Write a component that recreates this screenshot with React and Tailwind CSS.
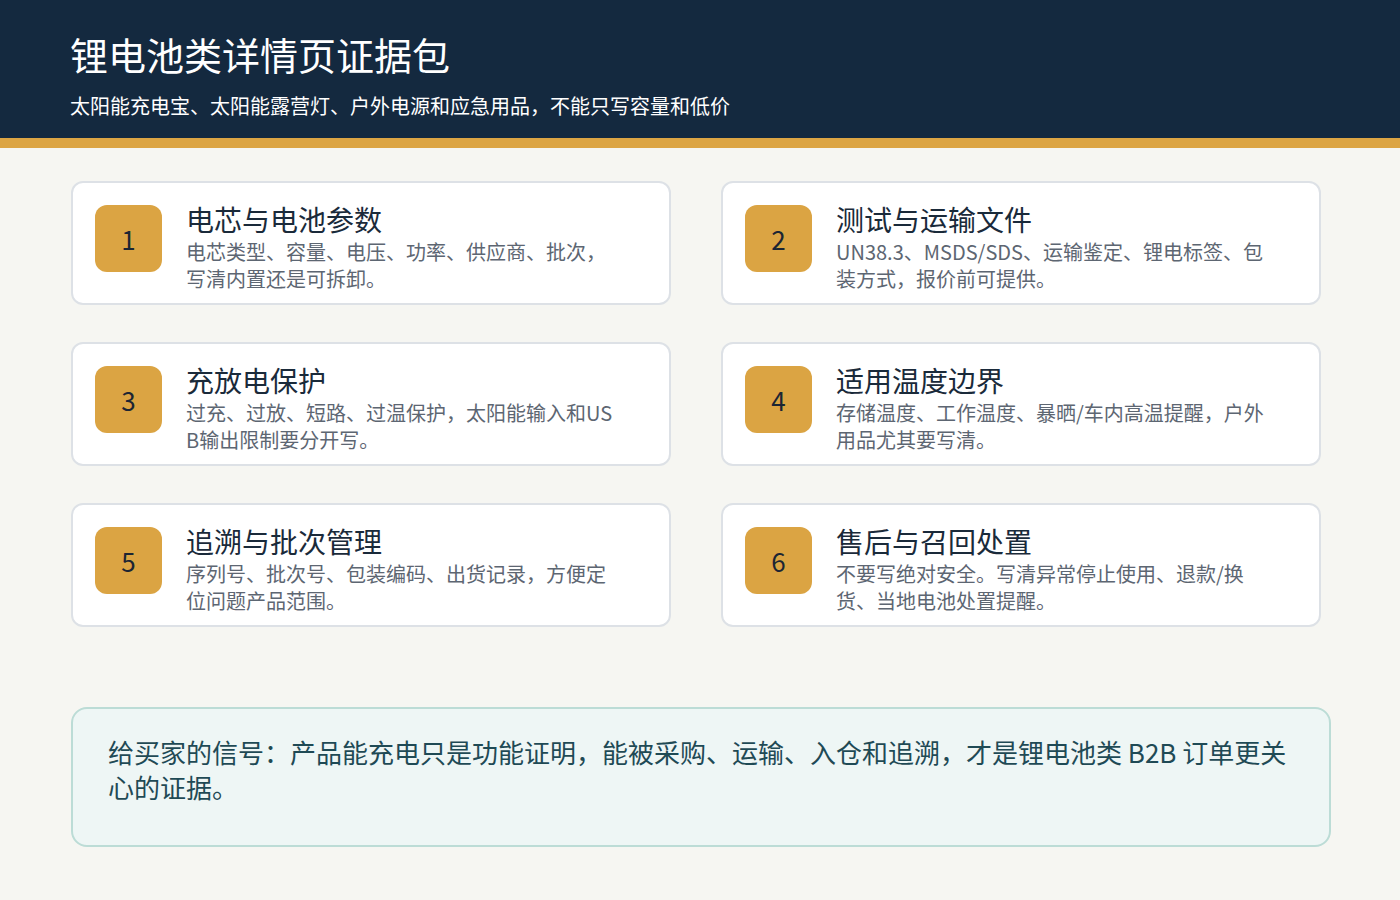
const items=[
["1","电芯与电池参数","电芯类型、容量、电压、功率、供应商、批次，写清内置还是可拆卸。"],
["2","测试与运输文件","UN38.3、MSDS/SDS、运输鉴定、锂电标签、包装方式，报价前可提供。"],
["3","充放电保护","过充、过放、短路、过温保护，太阳能输入和USB输出限制要分开写。"],
["4","适用温度边界","存储温度、工作温度、暴晒/车内高温提醒，户外用品尤其要写清。"],
["5","追溯与批次管理","序列号、批次号、包装编码、出货记录，方便定位问题产品范围。"],
["6","售后与召回处置","不要写绝对安全。写清异常停止使用、退款/换货、当地电池处置提醒。"],
];
export default function App(){
return <div className="w-[1400px] h-[900px] bg-[#f6f6f2] overflow-hidden" style={{fontFamily:'"Noto Sans CJK SC","Noto Sans",sans-serif'}}>
<div className="h-[138px] bg-[#14293f] pl-[70px] pt-[28px]">
<div className="text-[38px] leading-[52px] text-white">锂电池类详情页证据包</div>
<div className="text-[20px] leading-[28px] text-white mt-[12px]">太阳能充电宝、太阳能露营灯、户外电源和应急用品，不能只写容量和低价</div>
</div>
<div className="h-[10px] bg-[#dca544]"></div>
<div className="pl-[71px] pt-[33px] grid grid-cols-[600px_600px] gap-x-[50px] gap-y-[37px]">
{items.map(([n,t,d])=><div key={n} className="h-[124px] bg-white border-2 border-[#dde1e6] rounded-[12px] flex pl-[22px] pt-[22px]">
<div className="w-[67px] h-[67px] rounded-[12px] bg-[#dba443] flex items-center justify-center text-[26px] text-[#1c2533]">{n}</div>
<div className="ml-[24px] w-[430px]">
<div className="text-[28px] leading-[36px] text-[#1a2a3a] -mt-[4px]">{t}</div>
<div className="text-[20px] leading-[27px] text-[#5d6672] mt-[1px] break-all">{d}</div>
</div>
</div>)}
</div>
<div className="ml-[71px] mt-[80px] w-[1260px] h-[140px] bg-[#eef6f5] border-2 border-[#bcdcd6] rounded-[16px] pl-[35px] pt-[25px] pr-[40px]">
<div className="text-[26px] leading-[35px] text-[#1f4a55]">给买家的信号：产品能充电只是功能证明，能被采购、运输、入仓和追溯，才是锂电池类 B2B 订单更关心的证据。</div>
</div>
</div>}
